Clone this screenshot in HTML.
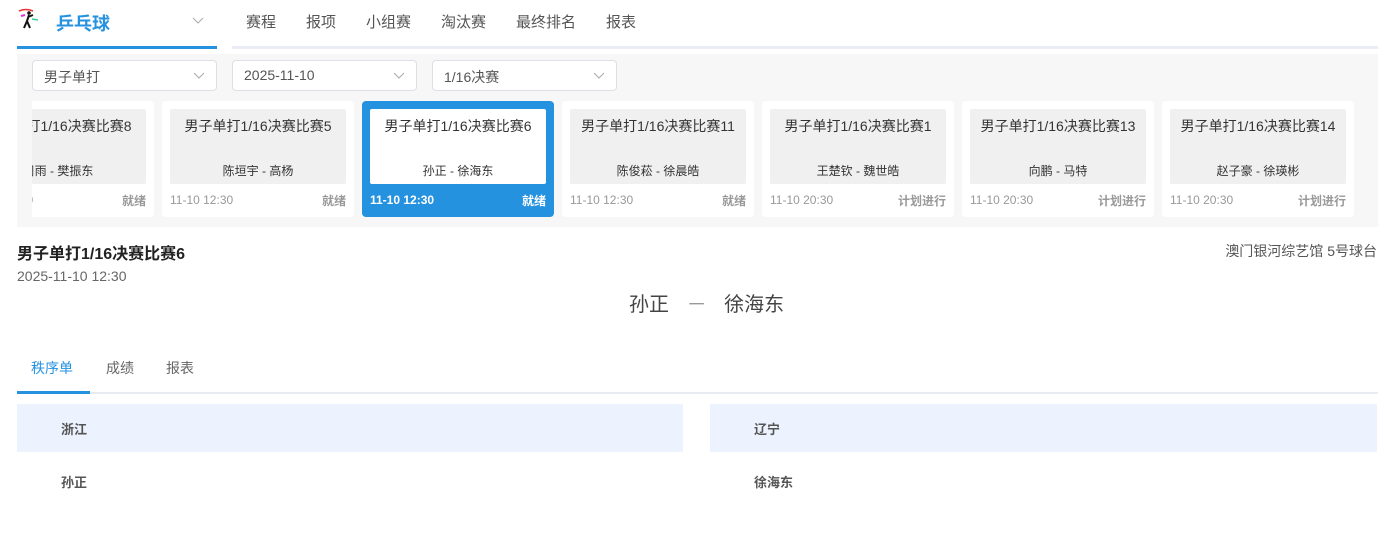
<!DOCTYPE html>
<html><head><meta charset="utf-8"><style>
*{margin:0;padding:0;box-sizing:border-box}
body{width:1388px;height:554px;background:#fff;font-family:"Liberation Sans","Noto Sans CJK SC",sans-serif;position:relative;overflow:hidden;color:#333}
.a{position:absolute;white-space:nowrap}
.nav{font-size:15px;color:#555;top:11px}
.sel{position:absolute;top:60px;height:31px;border:1px solid #dcdfe6;border-radius:4px;background:#fff;font-size:14px;color:#555;padding:6px 11px}
.sel svg{position:absolute;right:11px;top:11px}
.card{position:absolute;top:101px;width:192px;height:116px;background:#fff;border-radius:4px;overflow:hidden}
.card .in{position:absolute;left:8px;top:8px;width:176px;height:75px;background:#f0f0f0;border-radius:2px}
.card .t{position:absolute;top:7px;width:100%;text-align:center;font-size:14px;color:#333}
.card .p{position:absolute;top:53px;width:100%;text-align:center;font-size:12px;color:#333}
.card .d{position:absolute;left:8px;top:92px;font-size:12px;color:#999}
.card .s{position:absolute;right:8px;top:91px;font-size:12px;color:#999;font-weight:bold}
.card.on{background:#2592e0}
.card.on .in{background:#fff}
.card.on .d,.card.on .s{color:#fff;font-weight:bold}
</style></head><body>
<svg class="a" style="left:17px;top:8px" width="24" height="22" viewBox="0 0 24 22"><path d="M2 3 Q9 0 16 3" stroke="#e33" stroke-width="1.5" fill="none"/><path d="M4 8 L8 7" stroke="#d3d" stroke-width="2"/><path d="M15 11 L21 12" stroke="#3c9" stroke-width="1.5"/><circle cx="12" cy="5" r="1.8" fill="#111"/><path d="M12 7 L10 13 L7 20 M10 13 L13 20 M11 9 L16 7" stroke="#111" stroke-width="2" fill="none"/></svg>
<div class="a" style="left:56px;top:10px;font-size:18px;font-weight:bold;color:#2592e0">乒乓球</div>
<svg class="a" style="left:192px;top:17px" width="12" height="8"><path d="M1 1 L6 6 L11 1" stroke="#aaa" fill="none"/></svg>
<div class="a" style="left:17px;top:46px;width:200px;height:3px;background:#2592e0"></div>
<div class="a" style="left:232px;top:46px;width:1146px;height:3px;background:#eaedf5"></div>
<div class="a nav" style="left:246px">赛程</div>
<div class="a nav" style="left:306px">报项</div>
<div class="a nav" style="left:366px">小组赛</div>
<div class="a nav" style="left:441px">淘汰赛</div>
<div class="a nav" style="left:516px">最终排名</div>
<div class="a nav" style="left:606px">报表</div>
<div class="a" style="left:17px;top:54px;width:1361px;height:173px;background:#f7f7f8"></div>
<div class="sel" style="left:32px;width:185px">男子单打<svg width="12" height="8"><path d="M1 1 L6 6 L11 1" stroke="#aaa" fill="none"/></svg></div>
<div class="sel" style="left:232px;width:185px">2025-11-10<svg width="12" height="8"><path d="M1 1 L6 6 L11 1" stroke="#aaa" fill="none"/></svg></div>
<div class="sel" style="left:432px;width:185px">1/16决赛<svg width="12" height="8"><path d="M1 1 L6 6 L11 1" stroke="#aaa" fill="none"/></svg></div>
<div class="a" style="left:32px;top:101px;width:122px;height:116px;overflow:hidden">
<div class="card" style="left:-70px;top:0"><div class="in"><div class="t">男子单打1/16决赛比赛8</div><div class="p">周雨 - 樊振东</div></div><div class="d">11-10 12:30</div><div class="s">就绪</div></div></div>
<div class="card" style="left:162px"><div class="in"><div class="t">男子单打1/16决赛比赛5</div><div class="p">陈垣宇 - 高杨</div></div><div class="d">11-10 12:30</div><div class="s">就绪</div></div>
<div class="card on" style="left:362px"><div class="in"><div class="t">男子单打1/16决赛比赛6</div><div class="p">孙正 - 徐海东</div></div><div class="d">11-10 12:30</div><div class="s">就绪</div></div>
<div class="card" style="left:562px"><div class="in"><div class="t">男子单打1/16决赛比赛11</div><div class="p">陈俊菘 - 徐晨皓</div></div><div class="d">11-10 12:30</div><div class="s">就绪</div></div>
<div class="card" style="left:762px"><div class="in"><div class="t">男子单打1/16决赛比赛1</div><div class="p">王楚钦 - 魏世皓</div></div><div class="d">11-10 20:30</div><div class="s">计划进行</div></div>
<div class="card" style="left:962px"><div class="in"><div class="t">男子单打1/16决赛比赛13</div><div class="p">向鹏 - 马特</div></div><div class="d">11-10 20:30</div><div class="s">计划进行</div></div>
<div class="card" style="left:1162px"><div class="in"><div class="t">男子单打1/16决赛比赛14</div><div class="p">赵子豪 - 徐瑛彬</div></div><div class="d">11-10 20:30</div><div class="s">计划进行</div></div>
<div class="a" style="left:17px;top:240px;font-size:16px;font-weight:bold;color:#222">男子单打1/16决赛比赛6</div>
<div class="a" style="left:17px;top:268px;font-size:14px;color:#666">2025-11-10 12:30</div>
<div class="a" style="right:11px;top:241px;font-size:14px;color:#555">澳门银河综艺馆 5号球台</div>
<div class="a" style="left:629px;top:288px;font-size:20px;color:#444">孙正 <span style="color:#999;margin:0 12px">－</span> 徐海东</div>
<div class="a" style="left:31px;top:358px;font-size:14px;color:#2592e0">秩序单</div>
<div class="a" style="left:106px;top:358px;font-size:14px;color:#666">成绩</div>
<div class="a" style="left:166px;top:358px;font-size:14px;color:#666">报表</div>
<div class="a" style="left:17px;top:392px;width:1361px;height:2px;background:#e8ebf1"></div>
<div class="a" style="left:17px;top:391px;width:73px;height:3px;background:#2592e0"></div>
<div class="a" style="left:17px;top:404px;width:666px;height:48px;background:#ecf3fe"></div>
<div class="a" style="left:710px;top:404px;width:667px;height:48px;background:#ecf3fe"></div>
<div class="a" style="left:61px;top:419px;font-size:13px;font-weight:bold;color:#555">浙江</div>
<div class="a" style="left:754px;top:419px;font-size:13px;font-weight:bold;color:#555">辽宁</div>
<div class="a" style="left:61px;top:472px;font-size:13px;font-weight:bold;color:#555">孙正</div>
<div class="a" style="left:754px;top:472px;font-size:13px;font-weight:bold;color:#555">徐海东</div>
</body></html>
